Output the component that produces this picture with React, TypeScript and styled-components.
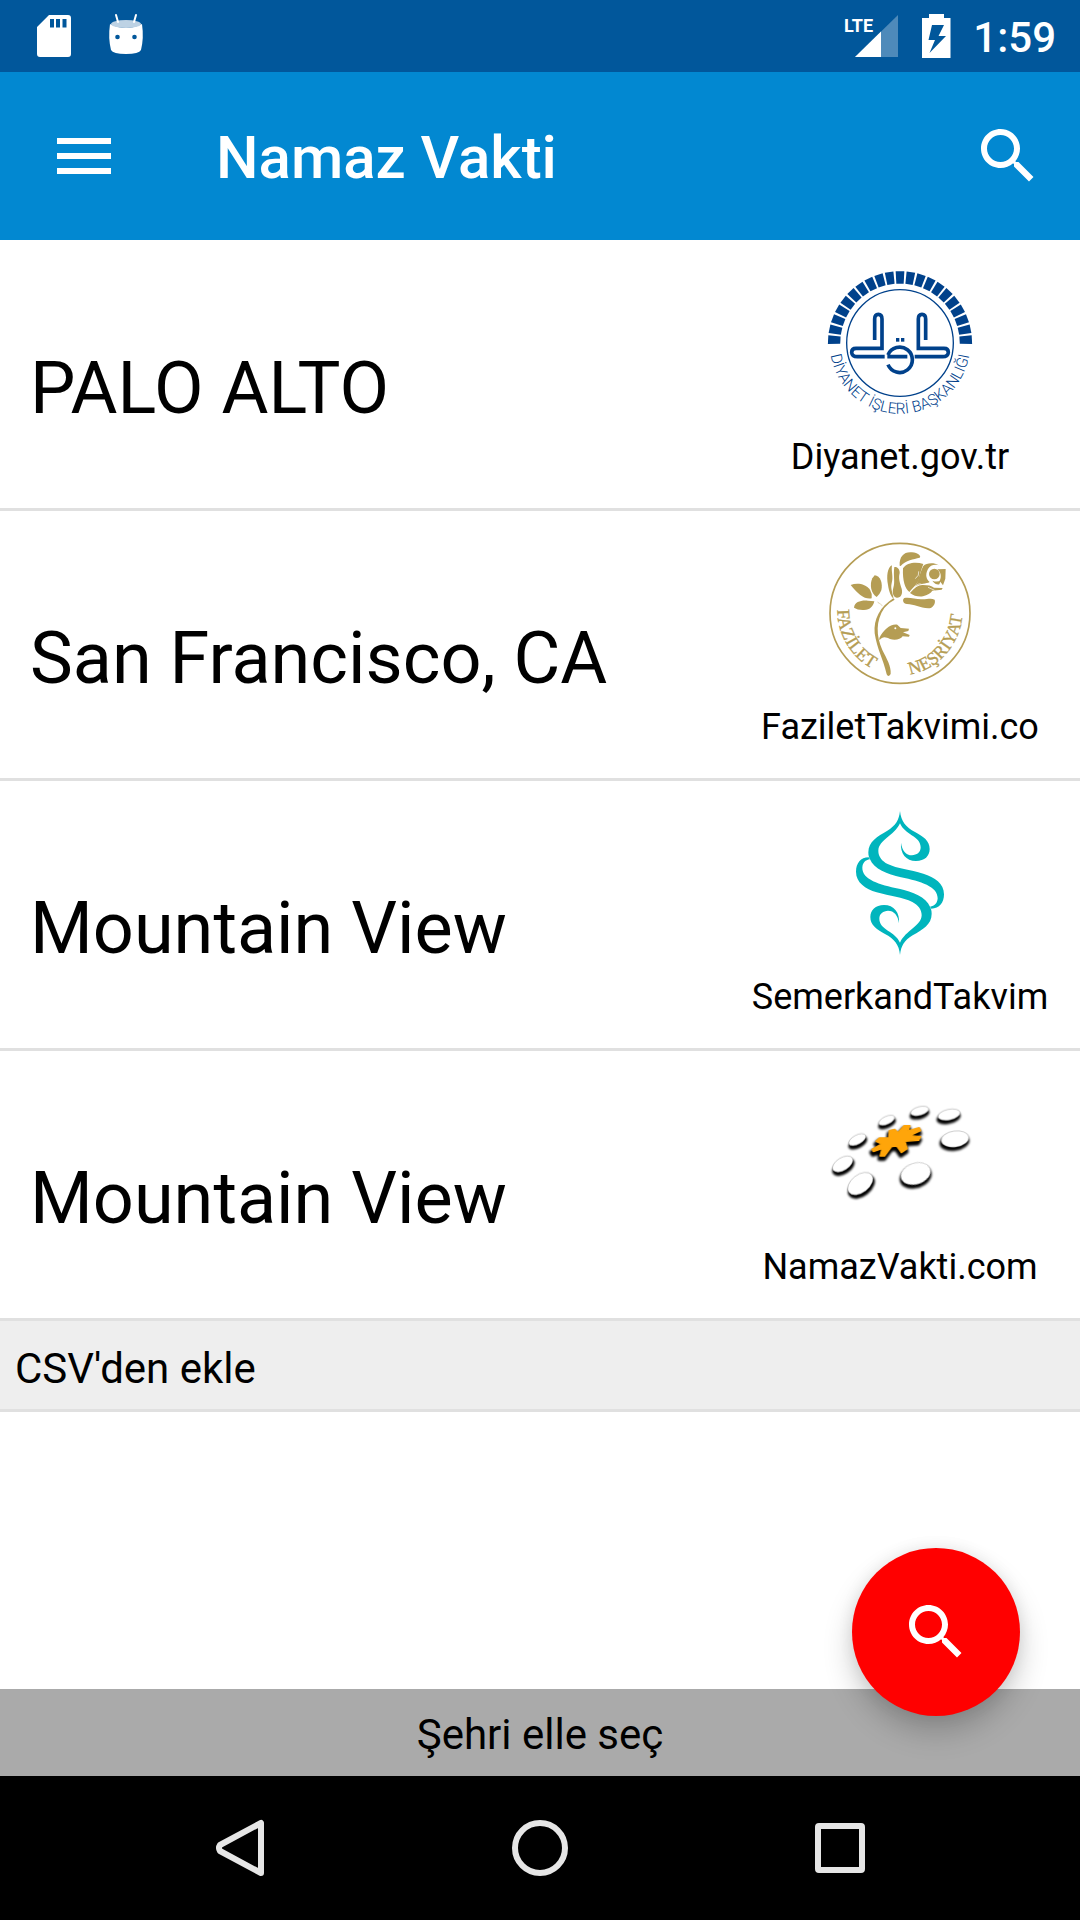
import React from "react";
import styled, { createGlobalStyle } from "styled-components";

const GlobalStyle = createGlobalStyle`
  * { box-sizing: border-box; }
  body { margin: 0; background: #fff; }
  button { font: inherit; color: inherit; border: 0; margin: 0; padding: 0; background: none; cursor: pointer; }
  svg { display: block; overflow: visible; }
`;

const Screen = styled.div`
  display: flex;
  flex-direction: column;
  min-height: 100vh;
  background: #fff;
  color: #000;
  font-family: Roboto, "Noto Sans", sans-serif;
`;

const StatusBar = styled.div`
  display: flex;
  align-items: center;
  justify-content: space-between;
  height: 72px;
  padding: 0 24px 0 36px;
  background: #01579b;
  color: #fff;
`;

const StatusGroup = styled.div<{ $gap: number }>`
  display: flex;
  align-items: center;
  gap: ${(p) => p.$gap}px;
`;

const Clock = styled.time`
  padding-top: 4px;
  font-size: 42px;
  font-weight: 500;
  line-height: 68px;
`;

const AppBar = styled.header`
  display: flex;
  align-items: center;
  height: 168px;
  padding: 0 36px 0 48px;
  background: #0288d1;
  color: #fff;
`;

const Title = styled.h1`
  flex: 1;
  margin: 0 0 0 96px;
  padding-top: 4px;
  font-size: 60px;
  font-weight: 500;
  line-height: 72px;
`;

const IconButton = styled.button`
  display: flex;
  width: 72px;
  height: 72px;
`;

const CityList = styled.ul`
  flex: 1;
  margin: 0;
  padding: 1px 0 0;
  list-style: none;
`;

const CityItem = styled.li`
  border-bottom: 3px solid #e0e0e0;
`;

const CityButton = styled.button`
  display: flex;
  width: 100%;
  padding: 30px 30px 29px;
  text-align: left;
`;

const CityName = styled.span`
  flex: 1;
  padding-top: 76px;
  font-size: 72px;
  line-height: 84px;
`;

const Source = styled.span`
  display: flex;
  flex-direction: column;
  align-items: center;
  gap: 21px;
  width: 300px;
`;

const SourceName = styled.span`
  font-size: 36px;
  line-height: 43px;
  white-space: nowrap;
`;

const ImportButton = styled.button`
  width: 100%;
  padding: 20px 15px 13px;
  background: #eee;
  font-size: 42px;
  line-height: 55px;
  text-align: left;
`;

const Footer = styled.div`
  position: relative;
`;

const ManualButton = styled.button`
  width: 100%;
  padding: 18px 16px 14px;
  background: #aaa;
  font-size: 42px;
  line-height: 55px;
`;

const Fab = styled.button`
  position: absolute;
  right: 60px;
  bottom: 60px;
  display: flex;
  align-items: center;
  justify-content: center;
  width: 168px;
  height: 168px;
  border-radius: 50%;
  background: #f00;
  color: #fff;
  box-shadow: 0 16px 30px rgba(0, 0, 0, 0.2), 0 0 16px rgba(0, 0, 0, 0.08);
`;

const NavBar = styled.nav`
  position: relative;
  display: flex;
  height: 144px;
  padding: 0 90px;
  background: #000;
`;

const NavButton = styled.button`
  flex: 1;
  display: flex;
  align-items: center;
  justify-content: center;
`;

const SearchIcon = () => (
  <svg width="72" height="72" viewBox="0 0 24 24" fill="#fff" aria-hidden="true">
    <path d="M15.5 14h-.79l-.28-.27C15.41 12.59 16 11.11 16 9.5 16 5.91 13.09 3 9.5 3S3 5.91 3 9.5 5.91 16 9.5 16c1.61 0 3.09-.59 4.23-1.57l.27.28v.79l5 4.99L20.49 19l-4.99-5zm-6 0C7.01 14 5 11.99 5 9.5S7.01 5 9.5 5 14 7.01 14 9.5 11.99 14 9.5 14z" />
  </svg>
);

const MenuIcon = () => (
  <svg width="72" height="72" viewBox="0 0 24 24" fill="#fff" aria-hidden="true">
    <path d="M3 18h18v-2H3v2zm0-5h18v-2H3v2zm0-7v2h18V6H3z" />
  </svg>
);

const SdCardIcon = () => (
  <svg width="36" height="44" viewBox="0 0 36 44" aria-hidden="true">
    <path
      fill="#fff"
      fillRule="evenodd"
      d="M13 1H32Q35 1 35 4V40Q35 43 32 43H4Q1 43 1 40V13ZM14 5V13.500H18V5ZM20 5V13.500H24V5ZM26.500 5V13.500H30.500V5Z"
    />
  </svg>
);

const DroidIcon = () => (
  <svg width="36" height="46" viewBox="0 0 36 46" aria-hidden="true">
    <path d="M2 11Q18 19 34 11Q36 25 33 37Q31 41 18 41Q5 41 3 37Q0 25 2 11Z" fill="#fff" />
    <ellipse cx="18" cy="11" rx="15" ry="4" fill="#bdd2e4" />
    <path d="M8 2L10 9M28 2L26 9" stroke="#fff" strokeWidth="2" strokeLinecap="round" />
    <circle cx="9.500" cy="24" r="2.300" fill="#01579b" />
    <circle cx="26.500" cy="24" r="2.300" fill="#01579b" />
  </svg>
);

const SignalIcon = () => (
  <svg width="54" height="44" viewBox="0 0 54 44" role="img" aria-label="LTE">
    <path d="M53 1V43H10Z" fill="#4e8aba" />
    <path d="M36 17.500V43H10Z" fill="#fff" />
    <text x="-1" y="18" fill="#fff" fontFamily="Roboto, sans-serif" fontSize="18" fontWeight="700">
      LTE
    </text>
  </svg>
);

const BatteryIcon = () => (
  <svg width="30" height="46" viewBox="0 0 30 46" aria-hidden="true">
    <path
      fill="#fff"
      fillRule="evenodd"
      d="M8 1H23V5H29.500V45H1V5H8ZM11 12L7.500 27H14L8.500 40L25 23H17.500L23 12Z"
    />
  </svg>
);

const teeth = Array.from({ length: 21 }, (_, i) => (i - 10) * 8.7);

const DiyanetLogo = () => (
  <svg width="144" height="144" viewBox="84 60 432 432" role="img" aria-label="Diyanet İşleri Başkanlığı">
    <g fill="#00418b">
      {teeth.map((angle) => (
        <path key={angle} d="M287 61H313L311 98H289Z" transform={`rotate(${angle} 300 277)`} />
      ))}
      <rect x="288" y="261" width="10" height="11" />
      <rect x="303" y="261" width="10" height="11" />
    </g>
    <g fill="none" stroke="#00418b">
      <circle cx="300" cy="276" r="160" strokeWidth="4" />
      <g strokeWidth="11">
        <path d="M224 267V204Q224 190 235 190Q246 190 246 204V292H168Q155 292 155 304Q156 317 172 317H254" />
        <path d="M377 267V204Q377 190 366 190Q355 190 355 204V292H432Q445 292 445 304Q444 317 428 317H344" />
        <path d="M262 317H322M264 312A38 38 0 1 1 264 341" />
      </g>
    </g>
    <path id="diyanet-arc" d="M89 277A211 211 0 0 0 511 277" fill="none" />
    <text fill="#00418b" fontFamily="Roboto, sans-serif" fontSize="46" fontWeight="300" textAnchor="middle">
      <textPath href="#diyanet-arc" startOffset="50%">
        DİYANET İŞLERİ BAŞKANLIĞI
      </textPath>
    </text>
  </svg>
);

const FaziletLogo = () => (
  <svg width="144" height="144" viewBox="84 63 432 432" role="img" aria-label="Fazilet Neşriyat">
    <circle cx="300" cy="280" r="210" fill="none" stroke="#b59d54" strokeWidth="5" />
    <g fill="#b59d54">
      <path d="M299 137C297 108 314 94 336 97C354 98 365 109 359 113C340 118 318 120 302 138Z" />
      <path d="M276 136C262 142 259 170 264 195C267 215 273 231 281 236C278 218 271 206 275 190C281 170 273 155 276 136Z" />
      <path d="M283 141C291 139 300 147 299 159C295 175 299 187 305 206C309 221 303 234 290 233C279 231 276 216 280 203C286 187 279 166 283 141Z" />
      <path d="M309 145C321 127 349 125 370 132C363 151 360 163 357 177C353 191 342 200 328 216C316 207 307 183 309 145Z" />
      <path d="M345 200C358 180 358 160 370 138C378 130 400 126 416 136C402 132 390 137 384 147C374 165 380 179 389 186C379 192 360 190 345 200Z" />
      <circle cx="403" cy="162" r="16" />
      <path d="M412 148L437 147L436 176L429 196L419 183C425 170 423 157 412 148Z" />
      <path d="M397 182Q413 188 423 180L418 193Q408 196 397 182Z" />
      <path d="M330 219C345 202 355 194 369 195C383 195 395 197 402 203L428 204L425 209L397 212C393 220 382 225 369 229Q347 232 330 219Z" />
      <path d="M313 234C325 231 346 236 363 238C381 239 392 233 404 239C408 251 398 265 385 265C360 264 342 252 321 252C309 251 306 239 313 234Z" />
      <path d="M152 195C171 187 196 191 210 209Q218 222 215 235C194 239 175 224 152 195Z" />
      <path d="M224 166C241 168 249 189 244 211Q239 224 230 231C213 221 208 194 217 175Z" />
      <path d="M162 263C164 245 184 240 204 242L223 244C220 258 211 270 192 270Q173 271 162 263Z" />
      <path d="M280 235C240 261 220 297 224 340C231 387 249 415 260 463Q265 473 272 462C274 439 260 416 247 390C228 347 227 302 253 264Q265 248 284 239Z" />
      <path d="M238 354C250 330 271 311 292 314L302 324L327 326L325 333L309 337L329 345L327 350L308 349C302 359 283 362 270 357C257 350 248 348 238 361Z" />
      <path d="M231 244L246 257L237 247L249 259L235 249Z" />
    </g>
    <circle cx="286" cy="325" r="3" fill="#fff" />
    <g fill="none" stroke="#fff" strokeWidth="2">
      <path d="M346 176Q359 166 356 154M344 202Q354 188 365 193M384 202L404 211" />
    </g>
    <path id="fazilet-arc" d="M112 268A188 198 0 0 0 488 268" fill="none" />
    <g fill="#b59d54" stroke="#b59d54" strokeWidth="1" fontFamily="Liberation Serif, serif" fontSize="54">
      <text>
        <textPath href="#fazilet-arc" startOffset="1">
          FAZİLET
        </textPath>
      </text>
      <text textAnchor="end">
        <textPath href="#fazilet-arc" startOffset="97%">
          NEŞRİYAT
        </textPath>
      </text>
    </g>
  </svg>
);

const ribbon =
  "M300 63C297 90 288 106 262 122C232 140 205 154 205 187C205 197 207 202 210 208C222 238 262 252 303 262C362 274 414 290 413 325C412 340 404 348 390 350L394 356C418 356 432 338 432 313C432 280 404 262 370 251C330 239 292 236 263 222C246 213 235 200 235 182C236 150 283 137 300 100C314 135 362 138 362 172C362 188 350 195 336 196C318 196 306 182 303 158C300 190 318 213 348 213C374 213 389 198 389 177C389 152 370 140 345 126C318 112 303 95 300 63Z";

const SemerkandLogo = () => (
  <svg width="144" height="144" viewBox="84 63 432 432" fill="#00b5bd" role="img" aria-label="Semerkand">
    <path d={ribbon} />
    <path d={ribbon} transform="rotate(180 300 279)" />
  </svg>
);

const stones = [
  { cx: 359, cy: 93, rx: 28, ry: 13, turn: -15 },
  { cx: 447, cy: 104, rx: 34, ry: 16, turn: -12 },
  { cx: 260, cy: 121, rx: 26, ry: 12, turn: -25 },
  { cx: 172, cy: 179, rx: 28, ry: 14, turn: -28 },
  { cx: 465, cy: 177, rx: 42, ry: 24, turn: -8 },
  { cx: 128, cy: 252, rx: 34, ry: 19, turn: -32 },
  { cx: 347, cy: 281, rx: 46, ry: 32, turn: -18 },
  { cx: 181, cy: 311, rx: 43, ry: 27, turn: -38 },
];

const blossom =
  "M268 152L284 148L294 158L312 137L330 137L324 153L358 143L362 152L330 167L362 170L356 181L315 184L322 206L304 218L290 198L275 200L254 228L240 228L246 206L220 215L216 208L244 192L228 184L238 174L266 174Z";

const NamazVaktiLogo = () => (
  <svg width="144" height="144" viewBox="84 3 432 432" role="img" aria-label="NamazVakti">
    <defs>
      <filter id="stone-shadow" x="-20%" y="-20%" width="140%" height="140%">
        <feGaussianBlur stdDeviation="3" />
      </filter>
    </defs>
    <g filter="url(#stone-shadow)">
      {stones.map((s) => (
        <ellipse
          key={s.cx}
          cx={s.cx - 3}
          cy={s.cy + 9}
          rx={s.rx + 3}
          ry={s.ry + 2}
          transform={`rotate(${s.turn} ${s.cx} ${s.cy})`}
        />
      ))}
      <path d={blossom} transform="translate(-2 9)" stroke="#000" strokeWidth="12" strokeLinejoin="round" />
    </g>
    {stones.map((s) => (
      <ellipse
        key={s.cx}
        cx={s.cx}
        cy={s.cy}
        rx={s.rx}
        ry={s.ry}
        fill="#fff"
        stroke="#777"
        strokeWidth="1"
        transform={`rotate(${s.turn} ${s.cx} ${s.cy})`}
      />
    ))}
    <path d={blossom} fill="#ffa50a" stroke="#ffa50a" strokeWidth="4" strokeLinejoin="round" />
  </svg>
);

const cities = [
  { name: "PALO ALTO", source: "Diyanet.gov.tr", Logo: DiyanetLogo },
  { name: "San Francisco, CA", source: "FaziletTakvimi.co", Logo: FaziletLogo },
  { name: "Mountain View", source: "SemerkandTakvim", Logo: SemerkandLogo },
  { name: "Mountain View", source: "NamazVakti.com", Logo: NamazVaktiLogo },
];

export default function App() {
  return (
    <Screen>
      <GlobalStyle />
      <StatusBar>
        <StatusGroup $gap={36}>
          <SdCardIcon />
          <DroidIcon />
        </StatusGroup>
        <StatusGroup $gap={22}>
          <SignalIcon />
          <BatteryIcon />
          <Clock>1:59</Clock>
        </StatusGroup>
      </StatusBar>
      <AppBar>
        <IconButton aria-label="Menü">
          <MenuIcon />
        </IconButton>
        <Title>Namaz Vakti</Title>
        <IconButton aria-label="Ara">
          <SearchIcon />
        </IconButton>
      </AppBar>
      <CityList>
        {cities.map(({ name, source, Logo }) => (
          <CityItem key={source}>
            <CityButton>
              <CityName>{name}</CityName>
              <Source>
                <Logo />
                <SourceName>{source}</SourceName>
              </Source>
            </CityButton>
          </CityItem>
        ))}
        <CityItem>
          <ImportButton>CSV'den ekle</ImportButton>
        </CityItem>
      </CityList>
      <Footer>
        <ManualButton>Şehri elle seç</ManualButton>
        <Fab aria-label="Şehir ara">
          <SearchIcon />
        </Fab>
      </Footer>
      <NavBar>
        <NavButton aria-label="Geri">
          <svg width="60" height="60" viewBox="0 0 60 60" fill="none" stroke="#e6e6e6" strokeWidth="6" strokeLinejoin="round">
            <path d="M51 5V55L10 33Q8 30 10 27Z" />
          </svg>
        </NavButton>
        <NavButton aria-label="Ana ekran">
          <svg width="60" height="60" viewBox="0 0 60 60" fill="none" stroke="#e6e6e6" strokeWidth="6">
            <circle cx="30" cy="30" r="25" />
          </svg>
        </NavButton>
        <NavButton aria-label="Son uygulamalar">
          <svg width="60" height="60" viewBox="0 0 60 60" fill="none" stroke="#e6e6e6" strokeWidth="6">
            <rect x="8" y="8" width="44" height="44" rx="1" />
          </svg>
        </NavButton>
      </NavBar>
    </Screen>
  );
}
